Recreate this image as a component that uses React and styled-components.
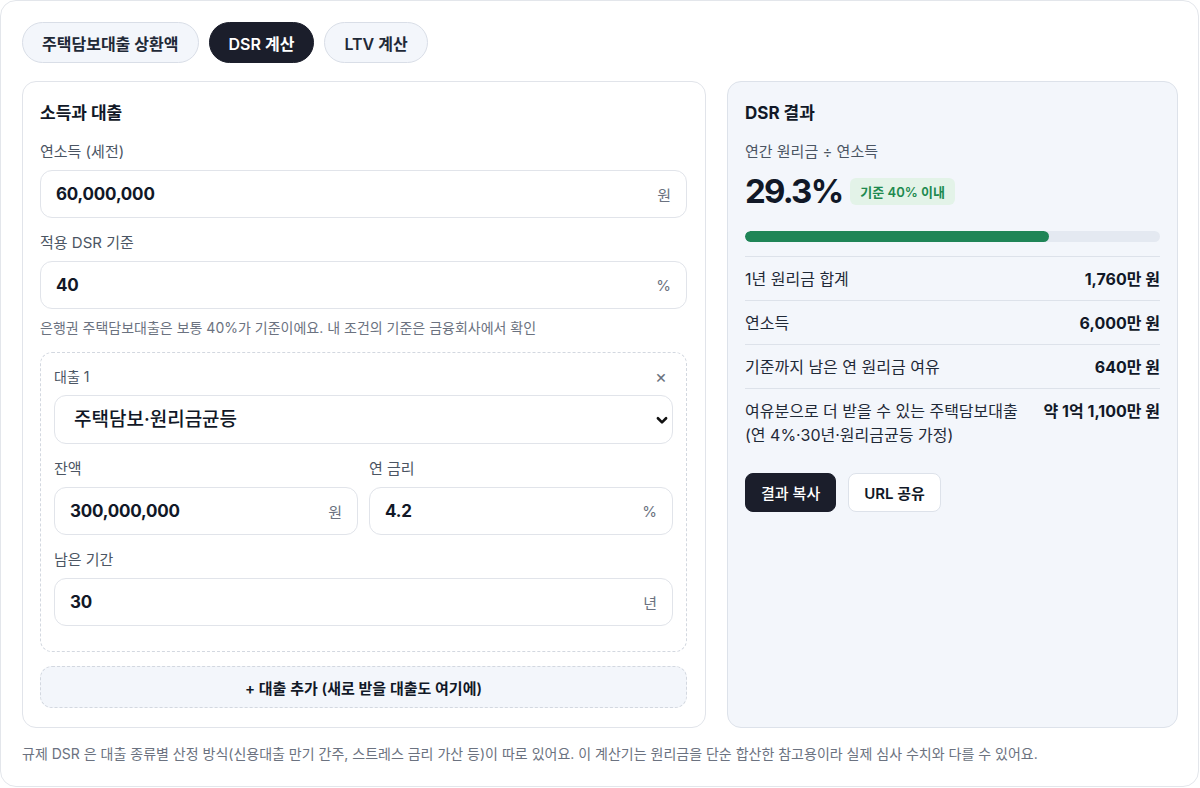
import styled, { createGlobalStyle } from "styled-components"

const GlobalStyle = createGlobalStyle`
  * { box-sizing: border-box; }
  body {
    margin: 0;
    background: #fff;
    font-family: "Inter", "Noto Sans CJK KR", sans-serif;
    color: #111827;
  }
`

const tabs = ["주택담보대출 상환액", "DSR 계산", "LTV 계산"]

const rows = [
  { label: "1년 원리금 합계", value: "1,760만 원" },
  { label: "연소득", value: "6,000만 원" },
  { label: "기준까지 남은 연 원리금 여유", value: "640만 원" },
  { label: "여유분으로 더 받을 수 있는 주택담보대출\n(연 4%·30년·원리금균등 가정)", value: "약 1억 1,100만 원" },
]

const ChevronIcon = () => (
  <svg width="14" height="14" viewBox="0 0 24 24" fill="none" stroke="#111" strokeWidth="4.5" strokeLinecap="round" strokeLinejoin="round">
    <path d="M5 9l7 7 7-7" />
  </svg>
)

const NumberField = ({ value, unit }) => (
  <InputBox>
    <input defaultValue={value} />
    <span>{unit}</span>
  </InputBox>
)

const App = () => {
  const dsr = 29.3
  const limit = 40

  return (
    <>
      <GlobalStyle />
      <Frame>
        <Tabs>
          {tabs.map((t, i) => (
            <Tab key={t} active={i === 1}>{t}</Tab>
          ))}
        </Tabs>

        <Columns>
          <Panel>
            <PanelTitle>소득과 대출</PanelTitle>
            <Field>
              <Label>연소득 (세전)</Label>
              <NumberField value="60,000,000" unit="원" />
            </Field>
            <Field>
              <Label>적용 DSR 기준</Label>
              <NumberField value="40" unit="%" />
            </Field>
            <Hint>은행권 주택담보대출은 보통 40%가 기준이에요. 내 조건의 기준은 금융회사에서 확인</Hint>

            <LoanCard>
              <LoanHead>
                <span>대출 1</span>
                <RemoveBtn>×</RemoveBtn>
              </LoanHead>
              <SelectWrap>
                <select defaultValue="a">
                  <option value="a">주택담보·원리금균등</option>
                  <option value="b">주택담보·원금균등</option>
                  <option value="c">신용대출</option>
                </select>
                <ChevronIcon />
              </SelectWrap>
              <TwoCol>
                <Field>
                  <Label>잔액</Label>
                  <NumberField value="300,000,000" unit="원" />
                </Field>
                <Field>
                  <Label>연 금리</Label>
                  <NumberField value="4.2" unit="%" />
                </Field>
              </TwoCol>
              <Field>
                <Label>남은 기간</Label>
                <NumberField value="30" unit="년" />
              </Field>
            </LoanCard>

            <AddButton>+ 대출 추가 (새로 받을 대출도 여기에)</AddButton>
          </Panel>

          <ResultPanel>
            <PanelTitle>DSR 결과</PanelTitle>
            <Label>연간 원리금 ÷ 연소득</Label>
            <BigRow>
              <BigNumber>{dsr}%</BigNumber>
              <Badge>기준 40% 이내</Badge>
            </BigRow>
            <Bar>
              <div style={{ width: `${(dsr / limit) * 100}%` }} />
            </Bar>
            <Rows>
              {rows.map(r => (
                <Row key={r.label}>
                  <span>{r.label}</span>
                  <strong>{r.value}</strong>
                </Row>
              ))}
            </Rows>
            <Actions>
              <ActionBtn dark>결과 복사</ActionBtn>
              <ActionBtn>URL 공유</ActionBtn>
            </Actions>
          </ResultPanel>
        </Columns>

        <Footnote>
          규제 DSR 은 대출 종류별 산정 방식(신용대출 만기 간주, 스트레스 금리 가산 등)이 따로 있어요. 이 계산기는 원리금을 단순 합산한 참고용이라 실제 심사 수치와 다를 수 있어요.
        </Footnote>
      </Frame>
    </>
  )
}

export default App

const Frame = styled.div`
  width: 1199px;
  height: 787px;
  border: 1px solid #e3e6eb;
  border-radius: 16px;
  padding: 21px 20px 21px 21px;
`
const Tabs = styled.div`
  display: flex;
  gap: 10px;
`
const Tab = styled.button`
  height: 41px;
  padding: 0 19px;
  border-radius: 999px;
  font-family: inherit;
  font-size: 16px;
  font-weight: 600;
  border: 1px solid ${p => (p.active ? "#1b1e2b" : "#d9dee7")};
  background: ${p => (p.active ? "#1b1e2b" : "#f3f6fb")};
  color: ${p => (p.active ? "#fff" : "#1f2937")};
`
const Columns = styled.div`
  display: grid;
  grid-template-columns: 684px minmax(0, 1fr);
  gap: 21px;
  margin-top: 18px;
  height: 647px;
`
const Panel = styled.div`
  border: 1px solid #e1e4ea;
  border-radius: 14px;
  padding: 19px 18px 18px 17px;
  background: #fff;
  display: flex;
  flex-direction: column;
  min-width: 0;
`
const ResultPanel = styled(Panel)`
  background: #f3f6fb;
  border-color: #dde2ea;
  padding-right: 17px;
`
const PanelTitle = styled.h2`
  margin: 0 0 17px;
  font-size: 17px;
  line-height: 24px;
  font-weight: 700;
  color: #111827;
`
const Field = styled.div`
  display: flex;
  flex-direction: column;
  gap: 8px;
  min-width: 0;
  & + & { margin-top: 15px; }
`
const Label = styled.div`
  font-size: 15px;
  line-height: 20px;
  color: #4b5563;
`
const InputBox = styled.div`
  display: flex;
  align-items: center;
  height: 48px;
  min-width: 0;
  border: 1px solid #e1e4ea;
  border-radius: 12px;
  background: #fff;
  padding: 0 15px;

  input {
    flex: 1;
    width: 100%;
    min-width: 0;
    border: 0;
    outline: none;
    background: transparent;
    font-family: inherit;
    font-size: 17px;
    font-weight: 700;
    letter-spacing: -0.2px;
    color: #111827;
    padding: 0;
  }
  span {
    font-size: 15px;
    color: #6b7280;
  }
`
const Hint = styled.p`
  margin: 10px 0 0;
  font-size: 14px;
  line-height: 18px;
  color: #6b7280;
`
const LoanCard = styled.div`
  margin-top: 15px;
  border: 1px dashed #d3d8e0;
  border-radius: 12px;
  padding: 14px 13px 25px;
  display: flex;
  flex-direction: column;

  & > ${Field} { margin-top: 15px; }
`
const LoanHead = styled.div`
  display: flex;
  justify-content: space-between;
  align-items: center;
  font-size: 14px;
  line-height: 20px;
  color: #4b5563;
  margin-bottom: 8px;
`
const RemoveBtn = styled.button`
  border: 0;
  background: none;
  padding: 0 6px;
  font-size: 18px;
  line-height: 20px;
  color: #6b7280;
  font-family: inherit;
`
const SelectWrap = styled.div`
  position: relative;
  select {
    width: 100%;
    height: 49px;
    appearance: none;
    border: 1px solid #e1e4ea;
    border-radius: 12px;
    background: #fff;
    padding: 0 19px;
    font-family: inherit;
    font-size: 19px;
    font-weight: 500;
    color: #111827;
    outline: none;
  }
  svg {
    position: absolute;
    right: 4px;
    top: 18px;
    pointer-events: none;
  }
`
const TwoCol = styled.div`
  display: grid;
  grid-template-columns: minmax(0, 1fr) minmax(0, 1fr);
  gap: 11px;
  margin-top: 15px;
  & > ${Field} + ${Field} { margin-top: 0; }
`
const AddButton = styled.button`
  margin-top: 14px;
  height: 42px;
  border: 1px dashed #d3d8e0;
  border-radius: 12px;
  background: #f3f6fb;
  font-family: inherit;
  font-size: 15px;
  font-weight: 600;
  color: #111827;
`
const BigRow = styled.div`
  display: flex;
  align-items: center;
  gap: 8px;
  margin-top: 9px;
  height: 40px;
`
const BigNumber = styled.div`
  font-size: 33px;
  font-weight: 700;
  letter-spacing: -1.8px;
  color: #111827;
`
const Badge = styled.span`
  display: inline-flex;
  align-items: center;
  height: 27px;
  padding: 0 10px;
  border-radius: 6px;
  background: #e3f3e8;
  color: #1e8a4f;
  font-size: 13px;
  font-weight: 600;
`
const Bar = styled.div`
  margin-top: 20px;
  height: 11px;
  border-radius: 6px;
  background: #e4e9f1;
  overflow: hidden;
  div {
    height: 100%;
    border-radius: 6px;
    background: #1f8557;
  }
`
const Rows = styled.div`
  margin-top: 14px;
`
const Row = styled.div`
  display: flex;
  justify-content: space-between;
  gap: 16px;
  border-top: 1px solid #dde2ea;
  padding: 10px 0 9px;
  font-size: 16px;
  line-height: 24px;
  color: #1f2937;
  span { white-space: pre-line; }
  strong { font-weight: 700; color: #111827; white-space: nowrap; }
`
const Actions = styled.div`
  display: flex;
  gap: 12px;
  margin-top: 17px;
`
const ActionBtn = styled.button`
  height: 39px;
  padding: 0 15px;
  border-radius: 8px;
  font-family: inherit;
  font-size: 15px;
  font-weight: ${p => (p.dark ? 500 : 600)};
  border: 1px solid ${p => (p.dark ? "#1b1e2b" : "#dde2ea")};
  background: ${p => (p.dark ? "#1b1e2b" : "#fff")};
  color: ${p => (p.dark ? "#fff" : "#111827")};
`
const Footnote = styled.p`
  margin: 17px 0 0;
  font-size: 14px;
  line-height: 18px;
  color: #6b7280;
`
